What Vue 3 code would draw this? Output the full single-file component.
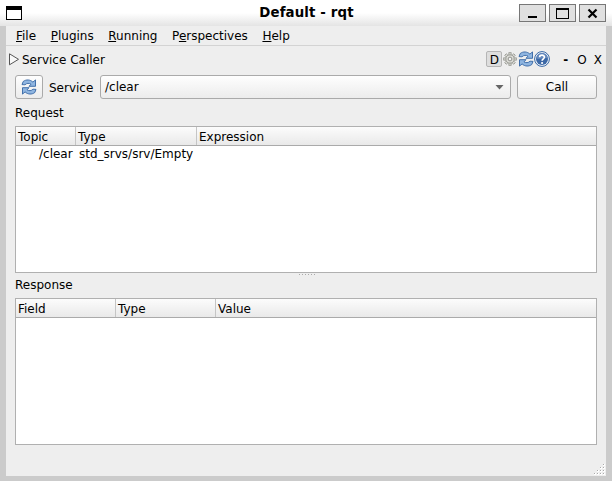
<script setup>
const menus = [
  { key: 'F', rest: 'ile' },
  { key: 'P', rest: 'lugins' },
  { key: 'R', rest: 'unning' },
  { pre: 'P', key: 'e', rest: 'rspectives' },
  { key: 'H', rest: 'elp' },
]
const gripDots = [[9, 0], [6, 3], [9, 3], [3, 6], [6, 6], [9, 6], [0, 9], [3, 9], [6, 9], [9, 9]]
const teeth = [0, 45, 90, 135, 180, 225, 270, 315]
const arrow = 'M1 5.600L2.200 2.500C5 .3 9.200.4 11.900 3.100L14.500 .9V7.300H8L10 5.200C8.300 4 5.500 4 4 5.800z'
</script>

<template>
  <div class="window">
    <header class="titlebar">
      <span class="app-icon"></span>
      <h1>Default - rqt</h1>
      <div class="controls">
        <button><svg width="26" height="17" shape-rendering="crispEdges"><path d="M8 11h9v2h-9z" /></svg></button>
        <button><svg width="26" height="17" shape-rendering="crispEdges"><path d="M6 3h13v11H6zM7 5v8h11V5z" fill-rule="evenodd" /></svg></button>
        <button><svg width="26" height="17"><path d="M8.500 4.500l8 8M16.500 4.500l-8 8" stroke="#000" stroke-width="2.200" /></svg></button>
      </div>
    </header>
    <main class="frame">
      <nav class="menubar">
        <span v-for="m in menus" :key="m.rest">{{ m.pre }}<u>{{ m.key }}</u>{{ m.rest }}</span>
      </nav>
      <section class="dock">
        <div class="dock-title">
          <svg class="expander" width="12" height="13" viewBox="0 0 12 13"><path d="M1.500 .8v11L10.500 6.300z" fill="#f8f8f8" stroke="#555" /></svg>
          <span class="name">Service Caller</span>
          <span class="d-button">D</span>
          <svg class="gear" width="14" height="14" viewBox="0 0 14 14">
            <rect v-for="a in teeth" :key="a" x="5.900" y=".7" width="2.200" height="2.600" fill="#deded9" stroke="#8e8f88" stroke-width=".8" :transform="`rotate(${a} 7 7)`" />
            <circle cx="7" cy="7" r="4.100" fill="#deded9" stroke="#999a93" stroke-width=".9" />
            <circle cx="7" cy="7" r="1.900" fill="#f2f2f2" stroke="#85867f" stroke-width=".9" />
          </svg>
          <svg class="refresh" width="16" height="16" viewBox="0 0 16 16">
            <g fill="#8fb5e0" stroke="#3465a4" stroke-width=".9" stroke-linejoin="round">
              <path :d="arrow" />
              <path :d="arrow" transform="rotate(180 8 8)" />
            </g>
          </svg>
          <svg class="help" width="16" height="16" viewBox="0 0 16 16">
            <circle cx="8" cy="8" r="7.400" fill="#f2f6fb" stroke="#3465a4" />
            <circle cx="8" cy="8" r="6" fill="#3c68a6" />
            <path d="M2.500 7.500a5.500 5.500 0 0 1 11 0C10 6 6 9 2.500 7.500z" fill="#6288bd" />
            <path d="M5.600 6.200C5.700 3.500 10.500 3.600 10.400 6.200C10.300 7.800 8.100 7.900 8.100 9.800" fill="none" stroke="#fff" stroke-width="1.700" />
            <circle cx="8.100" cy="12" r="1.100" fill="#fff" />
          </svg>
          <span class="dash">-</span><span class="float">O</span><span class="close">X</span>
        </div>
        <div class="toolbar">
          <button class="push reload">
            <svg width="16" height="16" viewBox="0 0 16 16">
              <g fill="#8fb5e0" stroke="#3465a4" stroke-width=".9" stroke-linejoin="round">
                <path :d="arrow" />
                <path :d="arrow" transform="rotate(180 8 8)" />
              </g>
            </svg>
          </button>
          <label>Service</label>
          <div class="push combo"><span>/clear</span><svg width="9" height="5"><path d="M.5 0h8L4.500 4.500z" fill="#666" /></svg></div>
          <button class="push call">Call</button>
        </div>
        <h2 class="request">Request</h2>
        <div class="table">
          <div class="head req"><span>Topic</span><span>Type</span><span>Expression</span></div>
          <div class="row req"><span>/clear</span><span>std_srvs/srv/Empty</span></div>
        </div>
        <div class="splitter"><svg width="17" height="2" shape-rendering="crispEdges"><rect v-for="i in 6" :key="i" :x="(i - 1) * 3" y="0" width="1" height="1" fill="#aaa" /></svg></div>
        <h2 class="response">Response</h2>
        <div class="table">
          <div class="head res"><span>Field</span><span>Type</span><span>Value</span></div>
        </div>
      </section>
      <footer class="status">
        <svg width="11" height="11" shape-rendering="crispEdges"><g v-for="([x, y], i) in gripDots" :key="i"><rect :x="x" :y="y" width="2" height="2" fill="#fff" /><rect :x="x" :y="y" width="1" height="1" fill="#aaa" /></g></svg>
      </footer>
    </main>
  </div>
</template>

<style>
body { margin: 0; background: #cbcbcb; }
</style>

<style scoped>
* { box-sizing: border-box; }
.window { width: 612px; height: 481px; display: flex; flex-direction: column; background: #cbcbcb; color: #000; font: 12px/16px "DejaVu Sans", sans-serif; white-space: pre; overflow: hidden; }
button { font: inherit; color: inherit; padding: 0; margin: 0; }
h1, h2 { margin: 0; font-size: 12px; font-weight: normal; }
svg { display: block; flex: none; }
.titlebar { height: 26px; flex: none; display: grid; grid-template-columns: 100px 1fr 100px; background: linear-gradient(#fff 0, #fff 50%, #e4e4e4); }
.app-icon { width: 16px; height: 14px; margin: 6px 0 0 6px; border: 1px solid #000; border-top-width: 4px; background: #fff; }
.titlebar h1 { font-size: 13.333px; font-weight: bold; letter-spacing: .14px; text-align: center; line-height: 26px; padding-left: 1px; }
.controls { display: flex; gap: 3px; padding: 4px 0 0 7px; }
.controls button { width: 27px; height: 18px; border: 1px solid #777; background: #e0e0e0; overflow: hidden; }
.frame { width: 600px; height: 450px; margin-left: 6px; background: #eee; display: flex; flex-direction: column; }
.menubar { height: 20px; flex: none; border-bottom: 1px solid #d3d3d3; display: flex; gap: 14.600px; padding: 2px 0 0 10px; }
.menubar u { text-decoration-thickness: 1px; text-underline-offset: 1px; }
.dock { flex: none; }
.dock-title { height: 29px; display: flex; align-items: center; padding: 0 4px 3px 2px; }
.name { flex: 1; margin-left: 2px; }
.d-button { width: 16px; height: 16px; border: 1px solid #b5b5b5; border-radius: 2px; background: #dedede; text-align: center; line-height: 16px; }
.gear { margin-left: 1px; }
.refresh { margin-left: 1px; }
.dash { margin-left: 13px; font-weight: bold; }
.float { margin-left: 9px; }
.close { margin-left: 7px; }
.name, .dash, .float, .close { padding-top: 2px; }
.toolbar { height: 24px; display: flex; align-items: center; padding: 0 9px; }
.push { height: 24px; border: 1px solid #aaa; border-radius: 3px; background: linear-gradient(#fefefe, #ececec); }
.reload { width: 28px; display: grid; place-items: center; }
.toolbar label { margin-left: 6px; width: 51px; padding-top: 2px; }
.combo { width: 411px; display: flex; justify-content: space-between; align-items: center; padding: 0 6px 0 4px; }
.call { width: 80px; margin-left: 6px; }
h2 { padding-left: 9px; }
.request { height: 27px; padding-top: 6px; }
.response { height: 22px; padding-top: 1px; }
.table { width: 582px; height: 147px; margin-left: 9px; border: 1px solid #b0b0b0; background: #fff; }
.head { display: grid; height: 19px; border-bottom: 1px solid #aaa; background: linear-gradient(#fcfcfc, #e9e9e9); line-height: 16px; }
.req { grid-template-columns: 60px 121px 1fr; }
.res { grid-template-columns: 100px 100px 1fr; }
.head span { padding: 2px 0 0 2px; border-right: 1px solid #c5c5c5; }
.head span:last-child { border: 0; }
.row { display: grid; line-height: 16px; }
.row span:first-child { padding-left: 23px; }
.row span:last-child { padding-left: 3px; }
.splitter { height: 3px; display: flex; justify-content: center; padding: 1px 0 0 2px; }
.status { flex: 1; display: flex; justify-content: flex-end; align-items: flex-end; padding: 0 1px 1px; }
</style>
